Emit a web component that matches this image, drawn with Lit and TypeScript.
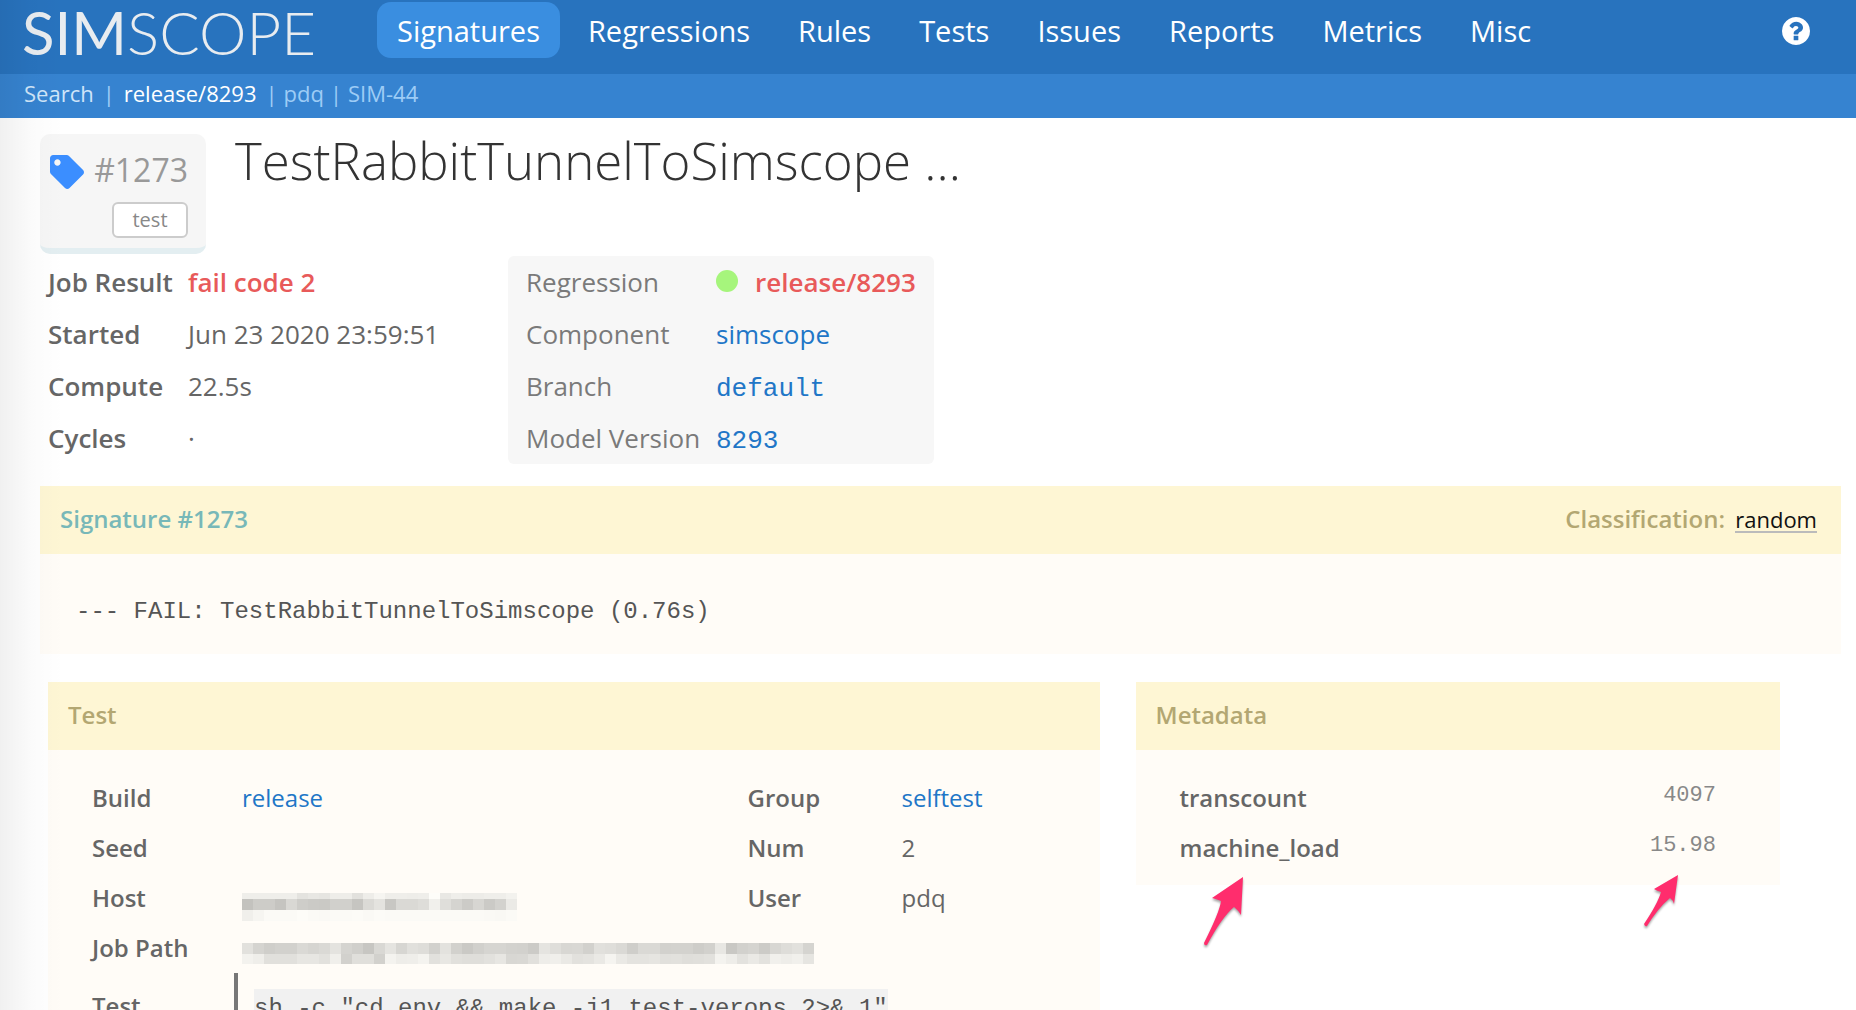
import { LitElement, html, css, svg } from "lit";
import { customElement, property } from "lit/decorators.js";
import { classMap } from "lit/directives/class-map.js";

const NAV = ["Signatures", "Regressions", "Rules", "Tests", "Issues", "Reports", "Metrics", "Misc"];

interface MosaicRow {
  y: number;
  h: number;
  cells: string;
}

/* Grey level of every redacted block, two hex digits per cell. */
const HOST_ROWS: MosaicRow[] = [
  { y: 0, h: 6, cells: "efefefefefe4e8e6eeeee2eef6efefeeeffee9efededefeff3" },
  { y: 6, h: 11, cells: "c3cdcdc5d9cecbcad1d1c6dbe4c8dadadef1dfd5ccd7cbd3eb" },
  { y: 17, h: 11, cells: "f0f6fbfbfbfdfbfafbfbfcfafcfbfbfbfbfbfbfbfbfbfaf9fb" },
];
const PATH_ROWS: MosaicRow[] = [
  {
    y: 0,
    h: 11,
    cells:
      "e2d5cfd2d2dad6dae4d5d0c7d9e5d7e1ded2e3d2cad1d6d6d3d2cce5dfd8d9d2e1dfdacfdadad2d3d3ced2e8c9d2d5ccd8dee2d5",
  },
  {
    y: 11,
    h: 10,
    cells:
      "f3efe1e1e1e7e7e2f0d2e0e0d2f4eeeff4e2e8e1dfdfe2e7d8d9e1eef0eae2e4eaf5eae4e4e6e1e2dfe0e2f4eee3eae3f1eef1e6",
  },
];

@customElement("redacted-text")
class RedactedText extends LitElement {
  @property({ attribute: false }) rows: MosaicRow[] = [];
  @property() label = "";

  static styles = css`
    :host {
      display: block;
    }
    .mosaic {
      display: block;
    }
  `;

  render() {
    const columns = Math.max(...this.rows.map((r) => r.cells.length / 2));
    const height = Math.max(...this.rows.map((r) => r.y + r.h));
    return html`<svg
      class="mosaic"
      width=${columns * 11}
      height=${height}
      shape-rendering="crispEdges"
      role="img"
      aria-label=${this.label}
    >
      ${this.rows.map((row) =>
        (row.cells.match(/../g) ?? []).map((hex, i) => {
          const g = parseInt(hex, 16);
          return svg`<rect x=${i * 11} y=${row.y} width="11" height=${row.h}
            fill=${`rgb(${g},${g - 1},${g - 5})`}></rect>`;
        })
      )}
    </svg>`;
  }
}

@customElement("app-root")
class AppRoot extends LitElement {
  static styles = css`
    :host {
      display: block;
      position: relative;
      height: 100vh;
      overflow: hidden;
      background: #fff;
      color: #666;
      font-family: "Open Sans", "Noto Sans", sans-serif;
      font-size: 24px;
    }
    * {
      box-sizing: border-box;
    }
    a {
      color: #2176c7;
      text-decoration: none;
    }
    table {
      border-collapse: collapse;
    }
    th,
    td {
      padding: 0;
      text-align: left;
      vertical-align: baseline;
      white-space: nowrap;
    }
    th {
      font-weight: 600;
    }
    .mono {
      font-family: "Liberation Mono", monospace;
      line-height: 1;
    }
    .fail {
      color: #e85a5a;
      font-weight: 600;
    }
    .edge-shade {
      position: absolute;
      left: 0;
      top: 0;
      bottom: 0;
      width: 64px;
      pointer-events: none;
      background: linear-gradient(90deg, rgba(0, 0, 0, 0.06), rgba(0, 0, 0, 0.015) 50%, transparent);
    }

    .topbar {
      display: flex;
      align-items: flex-start;
      height: 74px;
      padding: 2px 46px 0 22px;
      background: #2873be;
    }
    .logo {
      width: 355px;
      color: #e8ecf0;
      font-family: Lato, sans-serif;
      font-size: 60px;
      font-weight: 400;
      line-height: 60px;
    }
    .logo-thin {
      font-weight: 300;
    }
    .nav {
      display: flex;
      flex: 1;
      gap: 8px;
    }
    .nav-link {
      height: 56px;
      padding: 2px 20px 0;
      border-radius: 14px;
      color: #fff;
      font-size: 29px;
      line-height: 54px;
    }
    .nav-link.active {
      background: #3a8ee0;
    }
    .help {
      display: block;
      padding-top: 15px;
    }
    .help svg {
      display: block;
    }

    .subbar {
      display: flex;
      gap: 6px;
      height: 44px;
      padding: 0 21px;
      background: #3683d0;
      color: #9dccf6;
      font-size: 22px;
      line-height: 38px;
    }
    .subbar a {
      color: inherit;
    }
    .subbar .search {
      padding: 0 3px;
      color: #cfe5f9;
    }
    .subbar .current {
      padding: 0 3px;
      color: #fff;
    }

    .content {
      padding: 16px 15px 0 40px;
    }
    .heading {
      display: flex;
      align-items: flex-start;
      gap: 29px;
    }
    .card {
      display: flex;
      flex-direction: column;
      align-items: flex-end;
      gap: 12px;
      width: 166px;
      height: 120px;
      padding: 16px 18px 0 10px;
      border-bottom: 6px solid #e3eef1;
      border-radius: 10px;
      background: #f6f6f6;
    }
    .card-id {
      display: flex;
      align-items: center;
      justify-content: space-between;
      width: 100%;
      color: #999;
      font-size: 32px;
      line-height: 40px;
    }
    .tag-icon {
      margin-top: 3px;
    }
    .kind {
      width: 76px;
      height: 36px;
      border: 2px solid #ccc;
      border-radius: 6px;
      background: #fff;
      color: #888;
      font-size: 20px;
      line-height: 32px;
      text-align: center;
    }
    h1 {
      margin: 0;
      color: #333;
      font-size: 51px;
      font-weight: 300;
      line-height: 52px;
    }

    .summary {
      display: flex;
      align-items: flex-start;
      margin: 2px 0 22px 8px;
      font-size: 26px;
      line-height: 52px;
    }
    .job {
      width: 460px;
    }
    .job th {
      width: 140px;
    }
    .origin {
      padding: 0 18px;
      border-radius: 6px;
      background: #f7f7f7;
    }
    .origin th {
      width: 190px;
      color: #7a7a7a;
      font-weight: 400;
    }
    .dot {
      display: inline-block;
      width: 22px;
      height: 22px;
      margin-right: 17px;
      border-radius: 50%;
      background: #a6f57c;
    }

    .panel {
      position: relative;
      background: #fffcf7;
    }
    .panel-head {
      display: flex;
      justify-content: space-between;
      padding: 0 24px 2px 20px;
      background: #fef6d4;
      color: #b3a772;
      font-size: 24px;
      font-weight: 600;
      line-height: 66px;
    }
    h2 {
      margin: 0;
      font-size: inherit;
      font-weight: inherit;
    }
    .sig-title {
      color: #78b8b8;
    }
    .class-value {
      display: inline-block;
      margin-left: 4px;
      border-bottom: 2px solid #bbb;
      color: #111;
      font-size: 22px;
      font-weight: 400;
      line-height: 24px;
    }
    .log {
      margin: 0;
      padding: 16px 36px 0;
      color: #555;
      font-family: "Liberation Mono", monospace;
      font-size: 24px;
      line-height: 84px;
    }

    .panels {
      display: grid;
      grid-template-columns: 62fr 38fr;
      align-items: start;
      gap: 36px;
      margin: 28px 61px 0 8px;
    }
    .panel-body {
      padding: 23px 44px 12px;
    }
    .panel-body table {
      width: 100%;
      line-height: 50px;
    }
    .test-table {
      table-layout: fixed;
    }
    .col-label {
      width: 150px;
    }
    .col-side {
      width: 154px;
    }
    .top td,
    .top th {
      vertical-align: top;
    }
    .blocks {
      padding-top: 20px;
      vertical-align: top;
    }
    .command {
      margin-left: -8px;
      padding: 16px 16px 34px;
      border-left: 4px solid #777;
    }
    .code {
      display: block;
      width: fit-content;
      background: #f1f1f1;
      color: #555;
      font-family: "Liberation Mono", monospace;
      font-size: 24px;
      line-height: 40px;
    }
    .command-label {
      padding-top: 8px;
    }
    .meta-body {
      padding-right: 64px;
    }
    .num {
      color: #888;
      font-size: 22px;
      line-height: 46px;
      text-align: right;
      vertical-align: top;
    }
    .arrow {
      position: absolute;
      overflow: visible;
      fill: #ff2d6d;
      filter: drop-shadow(0 2px 1px rgba(0, 0, 0, 0.35));
    }
    .arrow-name {
      left: 68px;
      top: 195px;
    }
    .arrow-value {
      right: 102px;
      top: 193px;
    }
  `;

  render() {
    return html`
      <header>
        <div class="topbar">
          <a class="logo" href="#">SIM<span class="logo-thin">SCOPE</span></a>
          <nav class="nav">
            ${NAV.map(
              (name, i) =>
                html`<a href="#" class=${classMap({ "nav-link": true, active: i === 0 })}>${name}</a>`
            )}
          </nav>
          <a class="help" href="#" aria-label="Help">
            <svg width="28" height="28" viewBox="128 128 1536 1536" fill="#fff">
              <path
                d="M1024 1376v-192q0-14-9-23t-23-9h-192q-14 0-23 9t-9 23v192q0 14 9 23t23 9h192q14 0 23-9t9-23zM1280 704q0-88-55.5-163t-138.500-116-170-41q-243 0-371 213-15 24 8 42l132 100q7 6 19 6 16 0 25-12 53-68 86-92 34-24 86-24 48 0 85.500 26t37.500 59q0 38-20 61t-68 45q-63 28-115.500 86.500t-52.500 125.500v36q0 14 9 23t23 9h192q14 0 23-9t9-23q0-19 21.500-49.500t54.500-49.500q32-18 49-28.500t46-35 44.500-48 28-60.500 12.500-81zM1664 896q0 209-103 385.500t-279.500 279.500-385.500 103-385.500-103-279.500-279.500-103-385.500 103-385.500 279.500-279.500 385.500-103 385.500 103 279.500 279.500 103 385.500z"
              />
            </svg>
          </a>
        </div>
        <nav class="subbar">
          <a class="search" href="#">Search</a><span>|</span>
          <a class="current" href="#">release/8293</a><span>|</span>
          <a href="#">pdq</a><span>|</span><a href="#">SIM-44</a>
        </nav>
      </header>

      <main class="content">
        <div class="heading">
          <div class="card">
            <div class="card-id">
              <svg class="tag-icon" width="34" height="34" viewBox="0 0 512 512" fill="#3b8eff">
                <path
                  d="M0 252.118V48C0 21.49 21.49 0 48 0h204.118a48 48 0 0 1 33.941 14.059l211.882 211.882c18.745 18.745 18.745 49.137 0 67.882L293.823 497.941c-18.745 18.745-49.137 18.745-67.882 0L14.059 286.059A48 48 0 0 1 0 252.118zM112 64c-26.51 0-48 21.490-48 48s21.490 48 48 48 48-21.490 48-48-21.490-48-48-48z"
                />
              </svg>
              <span>#1273</span>
            </div>
            <a class="kind" href="#">test</a>
          </div>
          <h1>TestRabbitTunnelToSimscope ...</h1>
        </div>

        <div class="summary">
          <div class="job">
            <table>
              <tr><th scope="row">Job Result</th><td class="fail">fail code 2</td></tr>
              <tr><th scope="row">Started</th><td>Jun 23 2020 23:59:51</td></tr>
              <tr><th scope="row">Compute</th><td>22.5s</td></tr>
              <tr><th scope="row">Cycles</th><td>·</td></tr>
            </table>
          </div>
          <div class="origin">
            <table>
              <tr>
                <th scope="row">Regression</th>
                <td><span class="dot"></span><a class="fail" href="#">release/8293</a></td>
              </tr>
              <tr><th scope="row">Component</th><td><a href="#">simscope</a></td></tr>
              <tr><th scope="row">Branch</th><td><a class="mono" href="#">default</a></td></tr>
              <tr><th scope="row">Model Version</th><td><a class="mono" href="#">8293</a></td></tr>
            </table>
          </div>
        </div>

        <section class="panel">
          <div class="panel-head">
            <h2 class="sig-title">Signature #1273</h2>
            <div>Classification: <a class="class-value" href="#">random</a></div>
          </div>
          <pre class="log">--- FAIL: TestRabbitTunnelToSimscope (0.76s)</pre>
        </section>

        <div class="panels">
          <section class="panel">
            <div class="panel-head"><h2>Test</h2></div>
            <div class="panel-body">
              <table class="test-table">
                <colgroup>
                  <col class="col-label" />
                  <col />
                  <col class="col-side" />
                  <col class="col-side" />
                </colgroup>
                <tr>
                  <th scope="row">Build</th><td><a href="#">release</a></td>
                  <th scope="row">Group</th><td><a href="#">selftest</a></td>
                </tr>
                <tr>
                  <th scope="row">Seed</th><td></td>
                  <th scope="row">Num</th><td>2</td>
                </tr>
                <tr>
                  <th scope="row">Host</th>
                  <td class="blocks">
                    <redacted-text label="Redacted" .rows=${HOST_ROWS}></redacted-text>
                  </td>
                  <th scope="row">User</th><td>pdq</td>
                </tr>
                <tr class="top">
                  <th scope="row">Job Path</th>
                  <td class="blocks" colspan="3">
                    <redacted-text label="Redacted" .rows=${PATH_ROWS}></redacted-text>
                  </td>
                </tr>
                <tr class="top">
                  <th class="command-label" scope="row">Test</th>
                  <td colspan="3">
                    <div class="command">
                      <code class="code">sh -c "cd env &amp;&amp; make -j1 test-verops 2&gt;&amp; 1"</code>
                    </div>
                  </td>
                </tr>
              </table>
            </div>
          </section>

          <section class="panel">
            <div class="panel-head"><h2>Metadata</h2></div>
            <div class="panel-body meta-body">
              <table>
                <tr><th scope="row">transcount</th><td class="mono num">4097</td></tr>
                <tr><th scope="row">machine_load</th><td class="mono num">15.98</td></tr>
              </table>
            </div>
            <svg class="arrow arrow-name" width="40" height="70" viewBox="0 0 40 70" aria-hidden="true">
              <path d="M39 0 L8 21 Q12 22 17 24 Q16 34 0 66 Q0 69 3 68 Q18 40 30 30 Q34 33 37 38 Z" />
            </svg>
            <svg class="arrow arrow-value" width="34" height="52" viewBox="0 0 34 52" aria-hidden="true">
              <path d="M34 0 L10 14 Q13 16 17 17 Q14 28 0 49 Q1 52 3 51 Q14 33 26 23 Q29 25 30 29 Z" />
            </svg>
          </section>
        </div>
      </main>
      <div class="edge-shade"></div>
    `;
  }
}
